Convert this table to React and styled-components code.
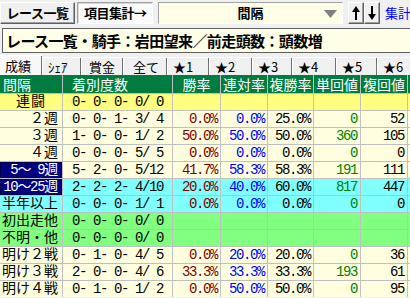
import React from "react";
import styled, { createGlobalStyle } from "styled-components";

const GlobalStyle = createGlobalStyle`
  html, body {
    margin: 0;
    padding: 0;
    background: #f0f0f0;
    font-family: "Noto Sans CJK JP", "DejaVu Sans", sans-serif;
    overflow: hidden;
  }
`;

const JP = `"Noto Sans CJK JP", "DejaVu Sans", sans-serif`;
const MONO = `"Liberation Mono", "Noto Sans CJK JP", monospace`;

const Page = styled.div`
  width: 410px;
  height: 298px;
  overflow: hidden;
  background: #f0f0f0;
`;

const TopBar = styled.div`
  display: flex;
  align-items: stretch;
  height: 22px;
  padding-top: 2px;
  padding-bottom: 2px;
  white-space: nowrap;
`;

const Btn = styled.button`
  box-sizing: border-box;
  flex: none;
  width: ${(p) => p.w}px;
  margin-right: ${(p) => p.mr || 0}px;
  padding: 0 0 0 ${(p) => p.pl || 0}px;
  font-family: ${JP};
  font-weight: bold;
  font-size: 13px;
  line-height: 16px;
  letter-spacing: -0.5px;
  color: #000;
  background: ${(p) => (p.pressed ? "#fbfbfb" : "#f0f0f0")};
  border: 1px solid;
  border-color: ${(p) =>
    p.pressed ? "#a0a0a0 #ffffff #ffffff #a0a0a0" : "#ffffff #606060 #606060 #ffffff"};
  box-shadow: ${(p) => (p.pressed ? "inset 1px 1px 0 #d8d8d8" : "inset -1px -1px 0 #a0a0a0")};
  display: flex;
  align-items: center;
  justify-content: ${(p) => (p.pl ? "flex-start" : "center")};
`;

const Combo = styled.div`
  box-sizing: border-box;
  flex: none;
  width: 185px;
  margin-right: 5px;
  position: relative;
  background: #ffffe8;
  border: 1px solid;
  border-color: #a0a0a0 #ffffff #ffffff #a0a0a0;
  display: flex;
  align-items: center;
  justify-content: center;
  font-family: ${JP};
  font-weight: bold;
  font-size: 13px;
  line-height: 16px;
`;

const ComboArrow = styled.svg`
  position: absolute;
  right: 5px;
  top: 7px;
`;

const LinkText = styled.span`
  flex: none;
  margin-left: 5px;
  display: flex;
  align-items: center;
  color: #0000ff;
  font-family: ${JP};
  font-size: 13px;
  line-height: 16px;
  white-space: nowrap;
`;

const TitleBar = styled.div`
  box-sizing: border-box;
  margin: 2px 0 0 2px;
  height: 25px;
  border: 1px solid #606060;
  border-right: none;
  background: #ffffe8;
  display: flex;
  align-items: center;
  padding-left: 3px;
  font-family: ${JP};
  font-weight: bold;
  font-size: 15px;
  line-height: 18px;
  letter-spacing: -0.6px;
  white-space: nowrap;
`;

const Tabs = styled.div`
  display: flex;
  align-items: flex-end;
  height: 20px;
  margin-top: 2px;
`;

const Tab = styled.div`
  box-sizing: border-box;
  width: ${(p) => p.w}px;
  flex: none;
  height: ${(p) => (p.active ? 20 : 18)}px;
  padding-left: ${(p) => p.pl}px;
  display: flex;
  align-items: center;
  font-family: ${JP};
  font-size: 13px;
  line-height: 15px;
  color: #000;
  background: ${(p) => (p.active ? "#f8f8f8" : "#f0f0f0")};
  border-top: 1px solid #ffffff;
  border-left: ${(p) => (p.first ? "none" : "1px solid #ffffff")};
  box-shadow: inset -1px 0 0 #707070;
  white-space: nowrap;
`;

const Table = styled.div`
  display: grid;
  grid-template-columns: 62px 109px 47px 46px 45px 46px 46px 10px;
  grid-auto-rows: 16px;
  grid-template-rows: 18px;
  gap: 1px;
  background: #c0c0c0;
  width: 420px;
`;

const Head = styled.div`
  background: #007c40;
  color: #fff;
  font-family: ${JP};
  font-size: 14px;
  line-height: 18px;
  white-space: nowrap;
  overflow: hidden;
  text-align: ${(p) => p.align || "center"};
  padding-left: ${(p) => p.pl || 0}px;
`;

const bgOf = {
  cream: "#ffffe0",
  yellow: "#ffff80",
  cyan: "#80ffff",
  green: "#80ff80",
};

const Label = styled.div`
  box-sizing: border-box;
  background: ${(p) => (p.sel ? "#000080" : bgOf[p.bg])};
  color: ${(p) => (p.sel ? "#fff" : "#000")};
  border: ${(p) => (p.sel ? "1px solid #00004a" : "none")};
  font-family: ${MONO};
  font-size: 14px;
  letter-spacing: ${(p) => (p.center ? "1px" : p.sel ? "-1.3px" : "0")};
  line-height: ${(p) => (p.sel ? 14 : 16)}px;
  white-space: pre;
  overflow: hidden;
  text-align: ${(p) => (p.center ? "center" : "right")};
  padding-right: ${(p) => (p.center ? 0 : 4)}px;
`;

const Cell = styled.div`
  background: ${(p) => bgOf[p.bg]};
  color: ${(p) => p.color || "#000"};
  font-family: ${MONO};
  font-size: 14px;
  letter-spacing: -1.4px;
  line-height: 16px;
  white-space: pre;
  overflow: hidden;
  text-align: ${(p) => (p.left ? "left" : "right")};
  padding-left: ${(p) => (p.left ? 9 : 0)}px;
  padding-right: ${(p) => (p.left ? 0 : 3)}px;
`;

const rows = [
  { label: "連闘", center: true, bg: "yellow", count: "0- 0- 0- 0/ 0", v: ["", "", "", "", ""] },
  { label: "２週", bg: "cream", count: "0- 0- 1- 3/ 4", v: ["0.0%", "0.0%", "25.0%", "0", "52"] },
  { label: "３週", bg: "cream", count: "1- 0- 0- 1/ 2", v: ["50.0%", "50.0%", "50.0%", "360", "105"] },
  { label: "４週", bg: "cream", count: "0- 0- 0- 5/ 5", v: ["0.0%", "0.0%", "0.0%", "0", "0"] },
  { label: "5～ 9週", sel: true, bg: "cream", count: "5- 2- 0- 5/12", v: ["41.7%", "58.3%", "58.3%", "191", "111"] },
  { label: "10～25週", sel: true, bg: "cyan", count: "2- 2- 2- 4/10", v: ["20.0%", "40.0%", "60.0%", "817", "447"] },
  { label: "半年以上", bg: "cyan", count: "0- 0- 0- 1/ 1", v: ["0.0%", "0.0%", "0.0%", "0", "0"] },
  { label: "初出走他", bg: "green", count: "0- 0- 0- 0/ 0", v: ["", "", "", "", ""] },
  { label: "不明・他", bg: "green", count: "0- 0- 0- 0/ 0", v: ["", "", "", "", ""] },
  { label: "明け２戦", bg: "cream", count: "0- 1- 0- 4/ 5", v: ["0.0%", "20.0%", "20.0%", "0", "36"] },
  { label: "明け３戦", bg: "cream", count: "2- 0- 0- 4/ 6", v: ["33.3%", "33.3%", "33.3%", "193", "61"] },
  { label: "明け４戦", bg: "cream", count: "0- 1- 0- 1/ 2", v: ["0.0%", "50.0%", "50.0%", "0", "95"] },
];

const valueColors = ["#800000", "#0000ff", "#000000", "#008000", "#000000"];

const tabs = [
  { t: "成績", w: 42, pl: 5 },
  { t: "ｼｪｱ", w: 39, pl: 5 },
  { t: "賞金", w: 42, pl: 7 },
  { t: "全て", w: 44, pl: 9 },
  { t: "★1", w: 42, pl: 5 },
  { t: "★2", w: 43, pl: 5 },
  { t: "★3", w: 40, pl: 5 },
  { t: "★4", w: 44, pl: 5 },
  { t: "★5", w: 41, pl: 5 },
  { t: "★6", w: 40, pl: 5 },
];

const Arrow = ({ down }) => (
  <svg width="14" height="18" viewBox="0 0 14 18">
    <g transform={down ? "rotate(180 7 9)" : undefined}>
      <rect x="6" y="5" width="2" height="11" fill="#000" />
      <polygon points="3,8 7,2 11,8" fill="#000" />
    </g>
  </svg>
);

export default function App() {
  return (
    <Page>
      <GlobalStyle />
      <TopBar>
        <Btn w={75} mr={2}>レース一覧</Btn>
        <Btn w={76} mr={5} pl={6} pressed>項目集計→</Btn>
        <Combo>
          間隔
          <ComboArrow width="13" height="8" viewBox="0 0 13 8">
            <polygon points="0,0 13,0 6.5,8" fill="#808080" />
          </ComboArrow>
        </Combo>
        <Btn w={16}><Arrow /></Btn>
        <Btn w={16}><Arrow down /></Btn>
        <LinkText>集計</LinkText>
      </TopBar>
      <TitleBar>レース一覧・騎手：岩田望来／前走頭数：頭数増</TitleBar>
      <Tabs>
        {tabs.map((tab, i) => (
          <Tab key={tab.t} w={tab.w} pl={tab.pl} active={i === 0} first={i === 0}>
            {tab.t}
          </Tab>
        ))}
      </Tabs>
      <Table>
        <Head align="left" pl={3}>間隔</Head>
        <Head align="left" pl={9}>着別度数</Head>
        <Head>勝率</Head>
        <Head>連対率</Head>
        <Head>複勝率</Head>
        <Head>単回値</Head>
        <Head>複回値</Head>
        <Head />
        {rows.map((r) => (
          <React.Fragment key={r.label}>
            <Label bg={r.bg} sel={r.sel} center={r.center}>{r.label}</Label>
            <Cell bg={r.bg} left>{r.count}</Cell>
            {r.v.map((val, i) => (
              <Cell key={i} bg={r.bg} color={valueColors[i]}>{val}</Cell>
            ))}
            <Cell bg={r.bg} />
          </React.Fragment>
        ))}
      </Table>
    </Page>
  );
}
